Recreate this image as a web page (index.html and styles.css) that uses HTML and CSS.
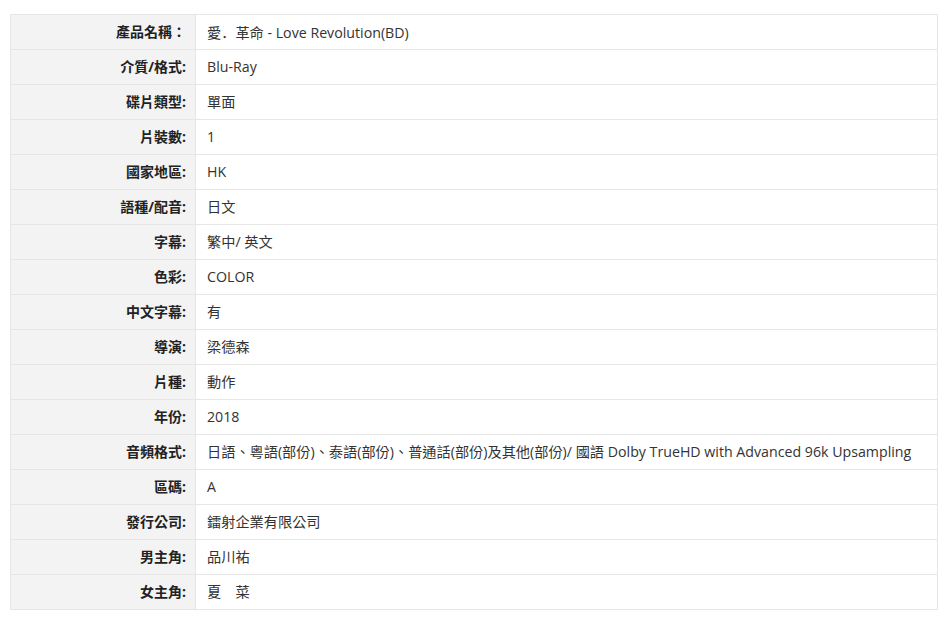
FILE: index.html
```html
<!DOCTYPE html>
<html lang="zh-Hant">
<head>
  <meta charset="UTF-8" />
  <title>產品資料</title>
  <link rel="stylesheet" href="styles.css">
</head>
<body>
  <table class="spec-table">
    <tr><th>產品名稱：</th><td>愛<span class="dot" lang="zh-Hans">．</span>革命 - Love Revolution(BD)</td></tr>
    <tr><th>介質/格式:</th><td>Blu-Ray</td></tr>
    <tr><th>碟片類型:</th><td>單面</td></tr>
    <tr><th>片裝數:</th><td>1</td></tr>
    <tr><th>國家地區:</th><td>HK</td></tr>
    <tr><th>語種/配音:</th><td>日文</td></tr>
    <tr><th>字幕:</th><td>繁中/ 英文</td></tr>
    <tr><th>色彩:</th><td>COLOR</td></tr>
    <tr><th>中文字幕:</th><td>有</td></tr>
    <tr><th>導演:</th><td>梁德森</td></tr>
    <tr><th>片種:</th><td>動作</td></tr>
    <tr><th>年份:</th><td>2018</td></tr>
    <tr><th>音頻格式:</th><td>日語、粵語(部份)、泰語(部份)、普通話(部份)及其他(部份)/ 國語 Dolby TrueHD with Advanced 96k Upsampling</td></tr>
    <tr><th>區碼:</th><td>A</td></tr>
    <tr><th>發行公司:</th><td>鐳射企業有限公司</td></tr>
    <tr><th>男主角:</th><td>品川祐</td></tr>
    <tr><th>女主角:</th><td>夏　菜</td></tr>
  </table>
</body>
</html>
```

FILE: styles.css
```css
body {
  margin: 14px 12px 0 10px;
  background: #fff;
  font-family: "Open Sans", "Noto Sans CJK TC", sans-serif;
  font-size: 14px;
  color: #333;
}

.spec-table {
  width: 928px;
  border-collapse: collapse;
}

.spec-table th,
.spec-table td {
  height: 34px;
  padding: 0;
  border: 1px solid #e6e6e6;
  line-height: 20px;
}

.spec-table th {
  width: 175px;
  padding-right: 9px;
  background: #f3f3f3;
  text-align: right;
  font-weight: bold;
  color: #222;
}

.spec-table td {
  padding-left: 11px;
  font-size: 14.2px;
  white-space: nowrap;
}

.dot {
  font-family: "Noto Sans CJK SC", sans-serif;
}
```
